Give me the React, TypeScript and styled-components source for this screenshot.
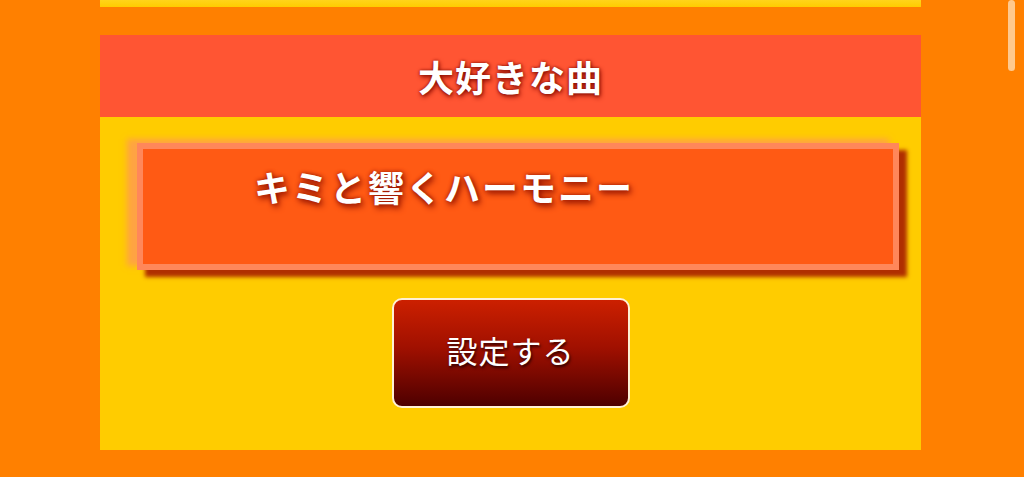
import React from 'react';
import styled, { createGlobalStyle } from 'styled-components';

const GlobalStyle = createGlobalStyle`
  html, body {
    margin: 0;
    padding: 0;
    background: #ff8000;
    overflow: hidden;
  }
  body {
    font-family: "Noto Sans CJK JP", "Noto Sans", sans-serif;
  }
`;

const Page = styled.div`
  width: 1024px;
  height: 477px;
  position: relative;
  background: #ff8000;
`;

const Column = styled.div`
  width: 821px;
  margin-left: 100px;
  display: flex;
  flex-direction: column;
`;

// tail of the panel above, cut off by the scroll position
const PrevPanelEdge = styled.div`
  height: 7px;
  background: linear-gradient(#ffd41a, #ffcc00);
  margin-bottom: 28px;
`;

const SectionHeader = styled.h2`
  margin: 0;
  height: 82px;
  background: #ff5533;
  display: flex;
  align-items: center;
  justify-content: center;
  color: #fff;
  font-size: 36px;
  font-weight: 700;
  letter-spacing: 1px;
  text-shadow: 0 0 3px #8a0c00, 1px 2px 5px #8a0c00;
`;

const SectionBody = styled.div`
  background: #ffcc00;
  height: 333px;
  padding-top: 26px;
  box-sizing: border-box;
  display: flex;
  flex-direction: column;
`;

const SongBox = styled.div`
  margin-left: 37px;
  width: 762px;
  height: 127px;
  box-sizing: border-box;
  border: 6px solid #ff875a;
  background: #ff5a14;
  box-shadow: 8px 7px 4px #b02e00, -10px -4px 6px rgba(255, 150, 90, 0.75);
  padding: 16px 0 0 111px;
  color: #fff;
  font-size: 36px;
  font-weight: 700;
  letter-spacing: 2px;
  text-shadow: 0 0 4px #a01800, 2px 3px 6px #8a1000;
  line-height: 1.2;
`;

const SaveButton = styled.button`
  align-self: center;
  margin-top: 28px;
  width: 238px;
  height: 110px;
  border: 2px solid #fff0d4;
  border-radius: 10px;
  background: linear-gradient(#cc2000, #a01000 45%, #4e0000);
  color: #fff;
  font-family: "Noto Sans CJK JP", "Noto Sans", sans-serif;
  font-size: 31px;
  font-weight: 400;
  letter-spacing: 1px;
  text-shadow: 1px 2px 3px #2a0000;
  padding: 0 0 8px;
  cursor: pointer;
`;

const ScrollThumb = styled.div`
  position: absolute;
  top: 0;
  right: 9px;
  width: 7px;
  height: 71px;
  border-radius: 4px;
  background: rgba(255, 225, 190, 0.75);
`;

export default function App() {
  return (
    <Page>
      <GlobalStyle />
      <Column>
        <PrevPanelEdge />
        <SectionHeader>大好きな曲</SectionHeader>
        <SectionBody>
          <SongBox>キミと響くハーモニー</SongBox>
          <SaveButton>設定する</SaveButton>
        </SectionBody>
      </Column>
      <ScrollThumb />
    </Page>
  );
}
